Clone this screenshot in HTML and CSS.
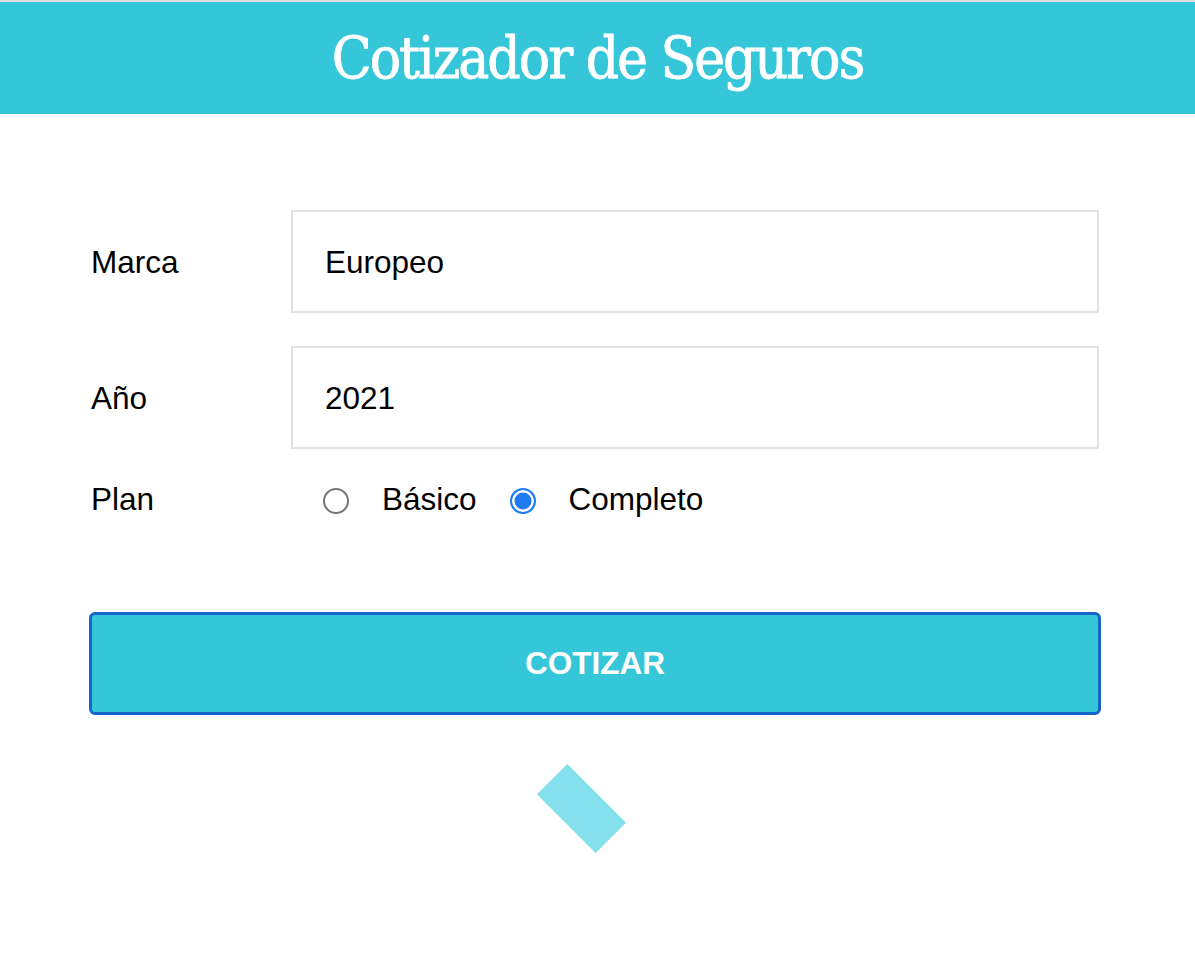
FILE: index.html
```html
<!DOCTYPE html>
<html lang="es">
<head>
<meta charset="utf-8">
<title>Cotizador de Seguros</title>
<link rel="stylesheet" href="styles.css">
</head>
<body>
<header class="header">
  <h1 class="title">Cotizador de Seguros</h1>
</header>
<main class="container">
  <form class="form">
    <div class="field">
      <label class="field-label" for="marca">Marca</label>
      <select class="select" id="marca">
        <option>Europeo</option>
      </select>
    </div>
    <div class="field">
      <label class="field-label" for="year">Año</label>
      <select class="select" id="year">
        <option>2021</option>
      </select>
    </div>
    <div class="field field-plan">
      <span class="field-label">Plan</span>
      <div class="options">
        <input class="radio" type="radio" name="plan" id="basico">
        <label class="option-label" for="basico">Básico</label>
        <input class="radio" type="radio" name="plan" id="completo" checked>
        <label class="option-label" for="completo">Completo</label>
      </div>
    </div>
    <button class="button" type="button">Cotizar</button>
  </form>
  <div class="spinner-area">
    <div class="spinner"></div>
  </div>
</main>
</body>
</html>
```
FILE: styles.css
```css
html, body {
  margin: 0;
  padding: 0;
  background: #fff;
}

body {
  font-family: "Liberation Sans", Arial, sans-serif;
  color: #000;
}

.header {
  border-top: 2px solid #dedede;
  background: #35c6da;
  height: 112px;
  display: flex;
  align-items: center;
  justify-content: center;
}

.title {
  margin: 0;
  color: #fff;
  font-family: "DejaVu Serif Condensed", "DejaVu Serif", serif;
  font-stretch: condensed;
  font-weight: normal;
  font-size: 58px;
  line-height: 112px;
  letter-spacing: -2px;
  -webkit-text-stroke: 0.8px #fff;
}

.container {
  padding: 96px 96px 0 91px;
}

.field {
  display: flex;
  align-items: center;
  margin-bottom: 33px;
}

.field-label {
  flex: 0 0 200px;
  font-size: 31.5px;
  line-height: 34px;
}

.select {
  flex: 1;
  height: 103px;
  box-sizing: border-box;
  border: 2px solid #e1e1e1;
  border-radius: 0;
  background: #fff;
  padding: 0 0 0 32px;
  margin: 0;
  font-family: "Liberation Sans", Arial, sans-serif;
  font-size: 31.5px;
  color: #000;
  -webkit-appearance: none;
  appearance: none;
  outline: none;
}

.field-plan {
  height: 34px;
}

.options {
  display: flex;
  align-items: center;
}

.radio {
  -webkit-appearance: none;
  appearance: none;
  width: 26px;
  height: 26px;
  box-sizing: border-box;
  border: 2px solid #767676;
  border-radius: 50%;
  background: #fff;
  margin: 3px 33px 0 33px;
}

.radio:first-child {
  margin-left: 32px;
}

.radio:checked {
  border-color: #1e7bf0;
  background: #1e7bf0;
  box-shadow: inset 0 0 0 2.5px #fff;
}

.option-label {
  font-size: 31.5px;
  line-height: 34px;
}

.button {
  display: block;
  width: calc(100% + 4px);
  margin: 96px -2px 0;
  height: 103px;
  box-sizing: border-box;
  background: #35c6da;
  border: 3px solid #1565cb;
  border-radius: 6px;
  color: #fff;
  font-family: "Liberation Sans", Arial, sans-serif;
  font-weight: bold;
  font-size: 31.5px;
  text-transform: uppercase;
  padding: 0;
}

.spinner-area {
  padding: 72px 0 140px;
}

.spinner {
  width: 83px;
  height: 43px;
  margin: 0 auto;
  background: #84e0ec;
  transform: translateX(-14px) rotate(45deg);
}
```
